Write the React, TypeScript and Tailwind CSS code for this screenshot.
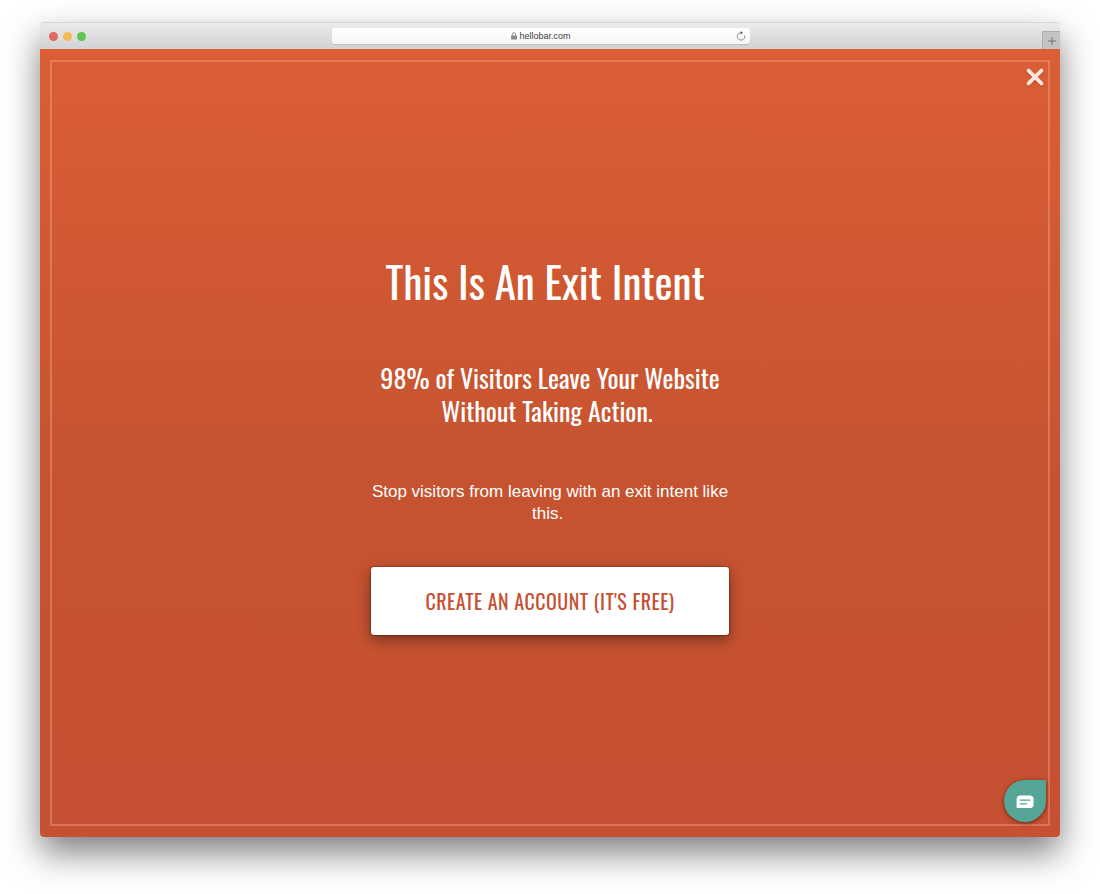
import { Plus } from "lucide-react";

const LIGHTS = ["bg-[#e2695e]", "bg-[#f3bc55]", "bg-[#5fc454]"];

function TitleBar() {
  return (
    <header className="grid h-[27px] shrink-0 grid-cols-[1fr_41%_1fr] items-center rounded-t-[4px] border-t border-[#d5d5d6] bg-linear-to-b from-[#ececee] to-[#d2d2d4]">
      <div className="flex gap-[5px] pl-[9px]">
        {LIGHTS.map((color) => (
          <span key={color} className={`size-[9px] rounded-full ${color}`} />
        ))}
      </div>

      <div className="relative -left-[9px] flex h-4 items-center justify-center gap-[2px] rounded-[3px] bg-linear-to-b from-white to-[#f6f6f6] shadow-[0_1px_1px_rgba(0,0,0,0.12)]">
        <svg viewBox="0 0 6 8" className="h-2 w-[6px]" aria-hidden="true">
          <path d="M1.3 4V2.4a1.7 1.7 0 0 1 3.4 0V4" fill="none" stroke="#8a8a8a" strokeWidth="0.9" />
          <rect x="0" y="3.4" width="6" height="4.2" rx="0.5" fill="#8a8a8a" />
        </svg>
        <span className="text-[9px] leading-4 text-[#404040]">hellobar.com</span>
        <button type="button" aria-label="Reload" className="absolute top-[3px] right-1">
          <svg viewBox="0 0 10 10" className="size-[10px]">
            <path d="M5.2 1.7A3.7 3.7 0 1 0 8.6 4.4" fill="none" stroke="#707070" strokeWidth="0.8" />
            <path d="M4.6 0l2.4 1.8-2.4 1.8z" fill="#606060" />
          </svg>
        </button>
      </div>

      <button
        type="button"
        aria-label="New tab"
        className="flex h-[18px] w-[18px] items-center justify-center self-end justify-self-end border-t border-l border-[#adadaf] bg-[#c3c3c5] text-[#707070]"
      >
        <Plus size={12} strokeWidth={2} />
      </button>
    </header>
  );
}

function ExitIntent() {
  return (
    <main className="relative flex flex-1 rounded-b-[4px] bg-linear-to-b from-[#db5e35] via-[#c55330] via-55% to-[#c65032] px-[10px] py-[11px] text-white">
      <section className="flex flex-1 flex-col items-center justify-center border-2 border-[#ffb8a0]/35">
        <div className="flex w-[358px] max-w-full flex-col text-center">
          <h1 className="font-['Oswald','Liberation_Sans_Narrow',sans-serif] text-[43px] leading-[60px] whitespace-nowrap">
            This Is An Exit Intent&nbsp;
          </h1>
          <h2 className="mt-[50px] font-['Oswald','Liberation_Sans_Narrow',sans-serif] text-[26px] leading-[33px]">
            98% of Visitors Leave Your Website Without Taking Action.&nbsp;
          </h2>
          <p className="mt-[54px] text-[17px] leading-[22px]">
            Stop visitors from leaving with an exit intent like this.&nbsp;
          </p>
          <button
            type="button"
            className="mt-[42px] h-[68px] rounded-[3px] bg-white font-['Oswald','Liberation_Sans_Narrow',sans-serif] text-[20px] tracking-wide whitespace-nowrap text-[#c65032] shadow-[0_5px_14px_rgba(0,0,0,0.4),0_0_2px_rgba(60,0,0,0.8)]"
          >
            CREATE AN ACCOUNT (IT'S FREE)
          </button>
        </div>
      </section>

      <button type="button" aria-label="Close" className="absolute top-[19px] right-4">
        <svg viewBox="0 0 18 18" className="size-[18px] drop-shadow-[0_1px_1px_rgba(0,0,0,0.2)]">
          <path d="M2.6 2.6l12.8 12.8M15.4 2.6L2.6 15.4" stroke="#ffe4da" strokeWidth="3.8" strokeLinecap="round" />
        </svg>
      </button>

      <button
        type="button"
        aria-label="Open chat"
        className="absolute right-[14px] bottom-[15px] flex size-[42px] items-center justify-center rounded-full rounded-tr-[6px] bg-[#56a698] pt-[2px] shadow-[0_1px_4px_rgba(0,0,0,0.5)]"
      >
        <svg viewBox="0 0 18 14" className="h-[14px] w-[18px]">
          <path d="M4.5 0.5h9.2a3.9 3.9 0 0 1 3.9 3.9v4.8a3.9 3.9 0 0 1-3.9 3.9H0.6V4.4a3.9 3.9 0 0 1 3.9-3.9z" fill="#fff" />
          <path d="M4.2 5.2h9.6M4.2 8.8h6.2" stroke="#56a698" strokeWidth="1.3" strokeLinecap="round" />
        </svg>
      </button>
    </main>
  );
}

export default function App() {
  return (
    <div className="flex min-h-screen flex-col overflow-hidden bg-white px-10 pt-[22px] pb-[57px] font-['Liberation_Sans',Arial,sans-serif]">
      <div className="flex flex-1 flex-col rounded-[4px] shadow-[0_16px_34px_rgba(0,0,0,0.5)]">
        <TitleBar />
        <ExitIntent />
      </div>
    </div>
  );
}
